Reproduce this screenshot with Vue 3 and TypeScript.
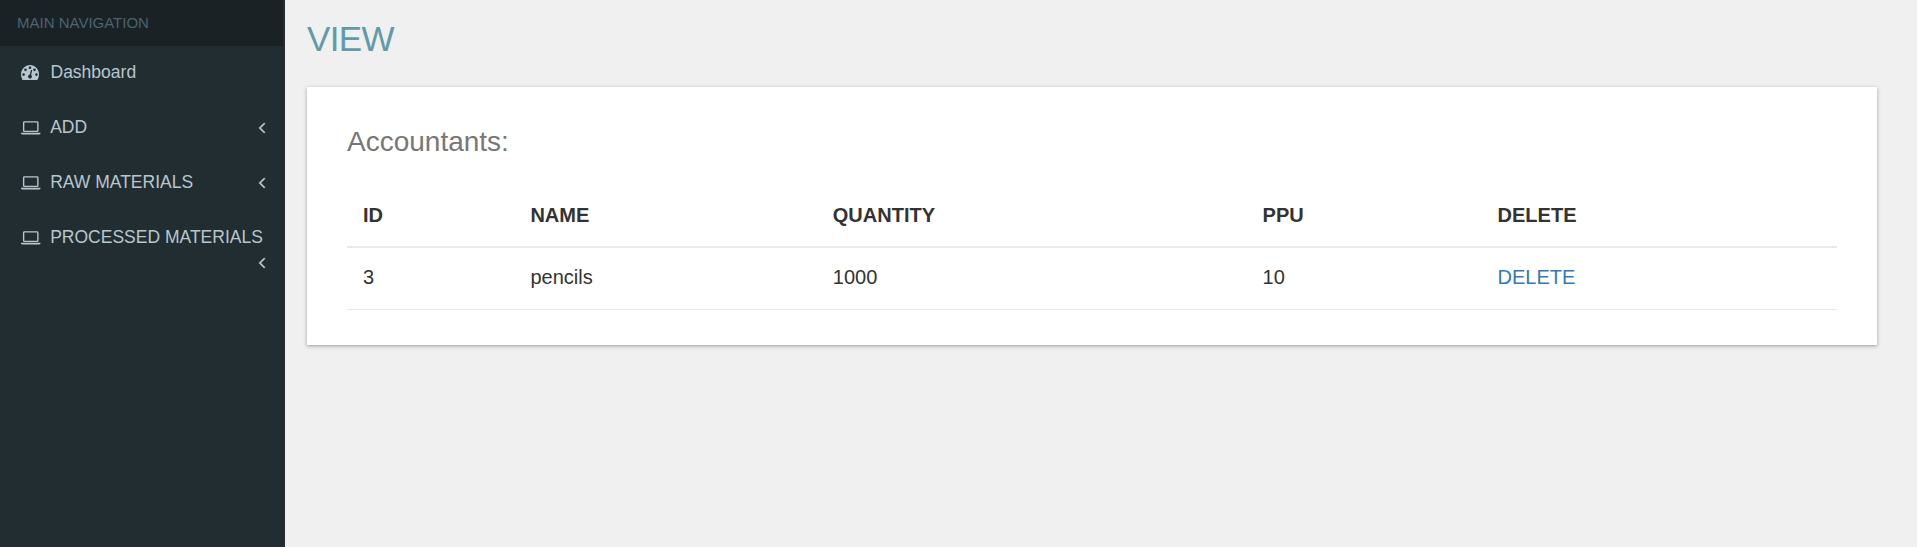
<script setup lang="ts">
interface NavItem {
  label: string
  icon: 'gauge' | 'laptop'
  expandable: boolean
}

interface Item {
  id: number
  name: string
  quantity: number
  ppu: number
}

const navItems: NavItem[] = [
  { label: 'Dashboard', icon: 'gauge', expandable: false },
  { label: 'ADD', icon: 'laptop', expandable: true },
  { label: 'RAW MATERIALS', icon: 'laptop', expandable: true },
  { label: 'PROCESSED MATERIALS', icon: 'laptop', expandable: true },
]

const columns: string[] = ['ID', 'NAME', 'QUANTITY', 'PPU', 'DELETE']

const items: Item[] = [{ id: 3, name: 'pencils', quantity: 1000, ppu: 10 }]
</script>

<template>
  <div class="layout">
    <aside class="sidebar">
      <div class="nav-header">MAIN NAVIGATION</div>
      <nav>
        <a v-for="item in navItems" :key="item.label" class="nav-link">
          <svg v-if="item.icon === 'gauge'" class="gauge" viewBox="0 256 1792 1408" preserveAspectRatio="none">
            <path d="M384 1152q0-53-37.5-90.5t-90.5-37.5-90.5 37.5-37.5 90.5 37.5 90.5 90.5 37.5 90.5-37.5 37.5-90.5zm192-448q0-53-37.5-90.5t-90.5-37.5-90.5 37.5-37.5 90.5 37.5 90.5 90.5 37.5 90.5-37.5 37.5-90.5zm428 481l101-382q6-26-7.5-48.5t-38.5-29.5-48 6.5-30 39.5l-101 382q-60 5-107 43.5t-63 98.5q-20 77 20 146t117 89 146-20 89-117q16-60-6-117t-72-91zm660-33q0-53-37.5-90.5t-90.5-37.5-90.5 37.5-37.5 90.5 37.5 90.5 90.5 37.5 90.5-37.5 37.5-90.5zm-640-640q0-53-37.5-90.5t-90.5-37.5-90.5 37.5-37.5 90.5 37.5 90.5 90.5 37.5 90.5-37.5 37.5-90.5zm448 192q0-53-37.5-90.5t-90.5-37.5-90.5 37.5-37.5 90.5 37.5 90.5 90.5 37.5 90.5-37.5 37.5-90.5zm320 448q0 261-141 483-19 29-54 29h-1402q-35 0-54-29-141-221-141-483 0-182 71-348t191-286 286-191 348-71 348 71 286 191 191 286 71 348z" />
          </svg>
          <svg v-else class="laptop" viewBox="0 0 20 14">
            <path fill-rule="evenodd" d="M3.500 0h13a1.500 1.500 0 0 1 1.500 1.500v8.200a1.500 1.500 0 0 1-1.500 1.500h-13A1.500 1.500 0 0 1 2 9.700v-8.200A1.500 1.500 0 0 1 3.500 0zM3.400 1.300v8.400h13.200V1.300zM0 11.800h20v.8q-.3 1.100-1.600 1.100H1.600Q.3 13.700 0 12.600z" />
          </svg>
          <span class="nav-label">{{ item.label }}</span>
          <svg v-if="item.expandable" class="arrow" viewBox="624 480 579 960" preserveAspectRatio="none">
            <path d="M1203 544q0 13-10 23l-393 393 393 393q10 10 10 23t-10 23l-50 50q-10 10-23 10t-23-10l-466-466q-10-10-10-23t10-23l466-466q10-10 23-10t23 10l50 50q10 10 10 23z" />
          </svg>
        </a>
      </nav>
    </aside>

    <main class="content">
      <h1>VIEW</h1>
      <section class="card">
        <h2>Accountants:</h2>
        <table>
          <colgroup>
            <col class="col-id" />
            <col class="col-name" />
            <col class="col-quantity" />
            <col class="col-ppu" />
            <col />
          </colgroup>
          <thead>
            <tr>
              <th v-for="column in columns" :key="column">{{ column }}</th>
            </tr>
          </thead>
          <tbody>
            <tr v-for="row in items" :key="row.id">
              <td>{{ row.id }}</td>
              <td>{{ row.name }}</td>
              <td>{{ row.quantity }}</td>
              <td>{{ row.ppu }}</td>
              <td><a class="delete">DELETE</a></td>
            </tr>
          </tbody>
        </table>
      </section>
    </main>
  </div>
</template>

<style>
body {
  margin: 0;
  background: #f0f0f0;
}
</style>

<style scoped>
.layout {
  display: flex;
  height: 547px;
  overflow: hidden;
  font-family: Arial, "Liberation Sans", sans-serif;
  background: #f0f0f0;
}

.sidebar {
  box-sizing: border-box;
  flex: 0 0 285px;
  padding-right: 2px;
  background: #222d32;
}

.nav-header {
  height: 46px;
  padding-left: 17px;
  font-size: 15px;
  line-height: 45px;
  color: #4b646f;
  background: #1a2226;
}

.nav-link {
  display: flex;
  flex-wrap: wrap;
  align-items: center;
  padding: 14px 18px 16px 21px;
  color: #b8c7ce;
  font-size: 17.5px;
  line-height: 25px;
  cursor: pointer;
}

.nav-link svg {
  display: block;
  fill: currentColor;
}

.nav-link .gauge {
  width: 18px;
  height: 15px;
  margin-right: 11.5px;
}

.nav-link .laptop {
  width: 19.5px;
  height: 14px;
  margin-right: 9.7px;
}

.nav-label {
  white-space: nowrap;
}

.nav-link .arrow {
  width: 6px;
  height: 10px;
  margin: 8px 0 7px auto;
  stroke: currentColor;
  stroke-width: 40px;
  overflow: visible;
}

.content {
  flex: 1;
  padding: 0 40px 0 22px;
}

h1 {
  margin: 0;
  padding-top: 19px;
  height: 68px;
  font-size: 35px;
  font-weight: 400;
  line-height: 39px;
  letter-spacing: -0.6px;
  color: #629aa9;
}

.card {
  box-sizing: border-box;
  height: 258px;
  padding: 39px 40px 35px;
  background: #fff;
  box-shadow: 0 1px 4px rgba(0, 0, 0, 0.3), 0 1px 1px rgba(0, 0, 0, 0.06);
}

h2 {
  margin: 0 0 28px;
  font-size: 28px;
  font-weight: 400;
  line-height: 31px;
  color: #777;
}

table {
  width: 1490px;
  table-layout: fixed;
  border-collapse: separate;
  border-spacing: 0;
  font-size: 20px;
  line-height: 29px;
  color: #333;
}

.col-id {
  width: 167.4px;
}

.col-name {
  width: 302.4px;
}

.col-quantity {
  width: 429.8px;
}

.col-ppu {
  width: 235px;
}

th,
td {
  padding: 16px;
  text-align: left;
  border-bottom: 1px solid #e9e9e9;
}

th {
  border-bottom-width: 2px;
}

td {
  padding: 15px 16px 17px;
}

.delete {
  color: #337ab7;
  cursor: pointer;
}
</style>
